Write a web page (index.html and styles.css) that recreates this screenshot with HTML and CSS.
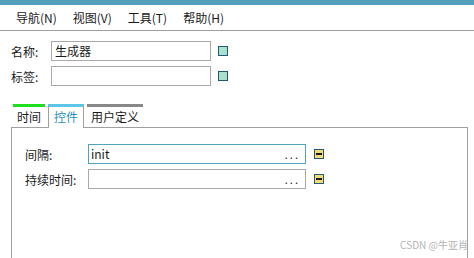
FILE: index.html
```html
<!DOCTYPE html>
<html>
<head>
    <meta charset="utf-8">
    <title>生成器</title>
    <link rel="stylesheet" href="styles.css">
</head>
<body>
    <div class="topbar"></div>

    <div class="menubar">
        <span class="menu-item">导航(N)</span>
        <span class="menu-item">视图(V)</span>
        <span class="menu-item">工具(T)</span>
        <span class="menu-item">帮助(H)</span>
    </div>

    <div class="form">
        <div class="row">
            <label class="label">名称:</label>
            <div class="field">生成器</div>
            <span class="btn btn-green"></span>
        </div>
        <div class="row">
            <label class="label">标签:</label>
            <div class="field"></div>
            <span class="btn btn-green"></span>
        </div>
    </div>

    <div class="tabs">
        <div class="tab tab-green">时间</div>
        <div class="tab tab-active">控件</div>
        <div class="tab tab-gray">用户定义</div>
    </div>

    <div class="panel">
        <div class="row">
            <label class="label wide">间隔:</label>
            <div class="field long focus"><span>init</span><span class="dots">...</span></div>
            <span class="btn btn-yellow"><i></i></span>
        </div>
        <div class="row">
            <label class="label wide">持续时间:</label>
            <div class="field long"><span></span><span class="dots">...</span></div>
            <span class="btn btn-yellow"><i></i></span>
        </div>
    </div>

    <div class="watermark">CSDN @牛亚肖</div>
</body>
</html>
```

FILE: styles.css
```css
body {
    margin: 0;
    width: 474px;
    height: 258px;
    overflow: hidden;
    font-family: "Noto Sans CJK SC", "Noto Sans", sans-serif;
    font-size: 12px;
    color: #1a1a1a;
    background: #fff;
    position: relative;
}
.topbar {
    height: 5px;
    background: #52a0bb;
}
.menubar {
    display: flex;
    align-items: center;
    height: 25px;
    padding-left: 16px;
    gap: 16px;
    border-bottom: 1px solid #a0a0a0;
}
.form {
    padding: 10px 0 0 11px;
    display: flex;
    flex-direction: column;
    gap: 5px;
}
.row {
    display: flex;
    align-items: center;
}
.label {
    width: 40px;
}
.label.wide {
    width: 63px;
}
.field {
    box-sizing: border-box;
    width: 160px;
    height: 20px;
    border: 1px solid #a9a9a9;
    padding: 0 5px 0 3px;
    line-height: 18px;
    display: flex;
    justify-content: space-between;
}
.field.long {
    width: 218px;
    padding-left: 2px;
}
.field.focus {
    border-color: #4fa3bf;
}
.dots {
    letter-spacing: 2px;
    font-size: 11px;
}
.btn {
    box-sizing: border-box;
    width: 10px;
    height: 10px;
    margin-left: 7px;
    border: 1px solid #1f5a78;
    display: flex;
    align-items: center;
    justify-content: center;
}
.btn-green {
    background: #ade0cb;
}
.btn-yellow {
    margin-left: 8px;
    background: #f7d970;
}
.btn-yellow i {
    width: 6px;
    height: 2px;
    background: #1a1a1a;
}
.tabs {
    display: flex;
    margin: 18px 0 0 13px;
    height: 23px;
}
.tab {
    box-sizing: border-box;
    height: 23px;
    border-top: 3px solid;
    text-align: center;
    line-height: 19px;
    margin-right: 3px;
}
.tab-green {
    width: 32px;
    border-top-color: #1ee01e;
}
.tab-active {
    width: 36px;
    height: 24px;
    border-top-color: #5bc6ea;
    border-left: 1px solid #a0a0a0;
    border-right: 1px solid #a0a0a0;
    color: #2a8fc0;
    background: #fff;
    position: relative;
    z-index: 1;
}
.tab-gray {
    width: 56px;
    border-top-color: #888;
}
.panel {
    margin: 0 6px 0 11px;
    height: 114px;
    border: 1px solid #a0a0a0;
    border-bottom: none;
    padding: 16px 0 0 13px;
    display: flex;
    flex-direction: column;
    gap: 5px;
}
.watermark {
    position: absolute;
    right: 6px;
    bottom: 6px;
    font-size: 10px;
    color: #b4b4b4;
}
```
